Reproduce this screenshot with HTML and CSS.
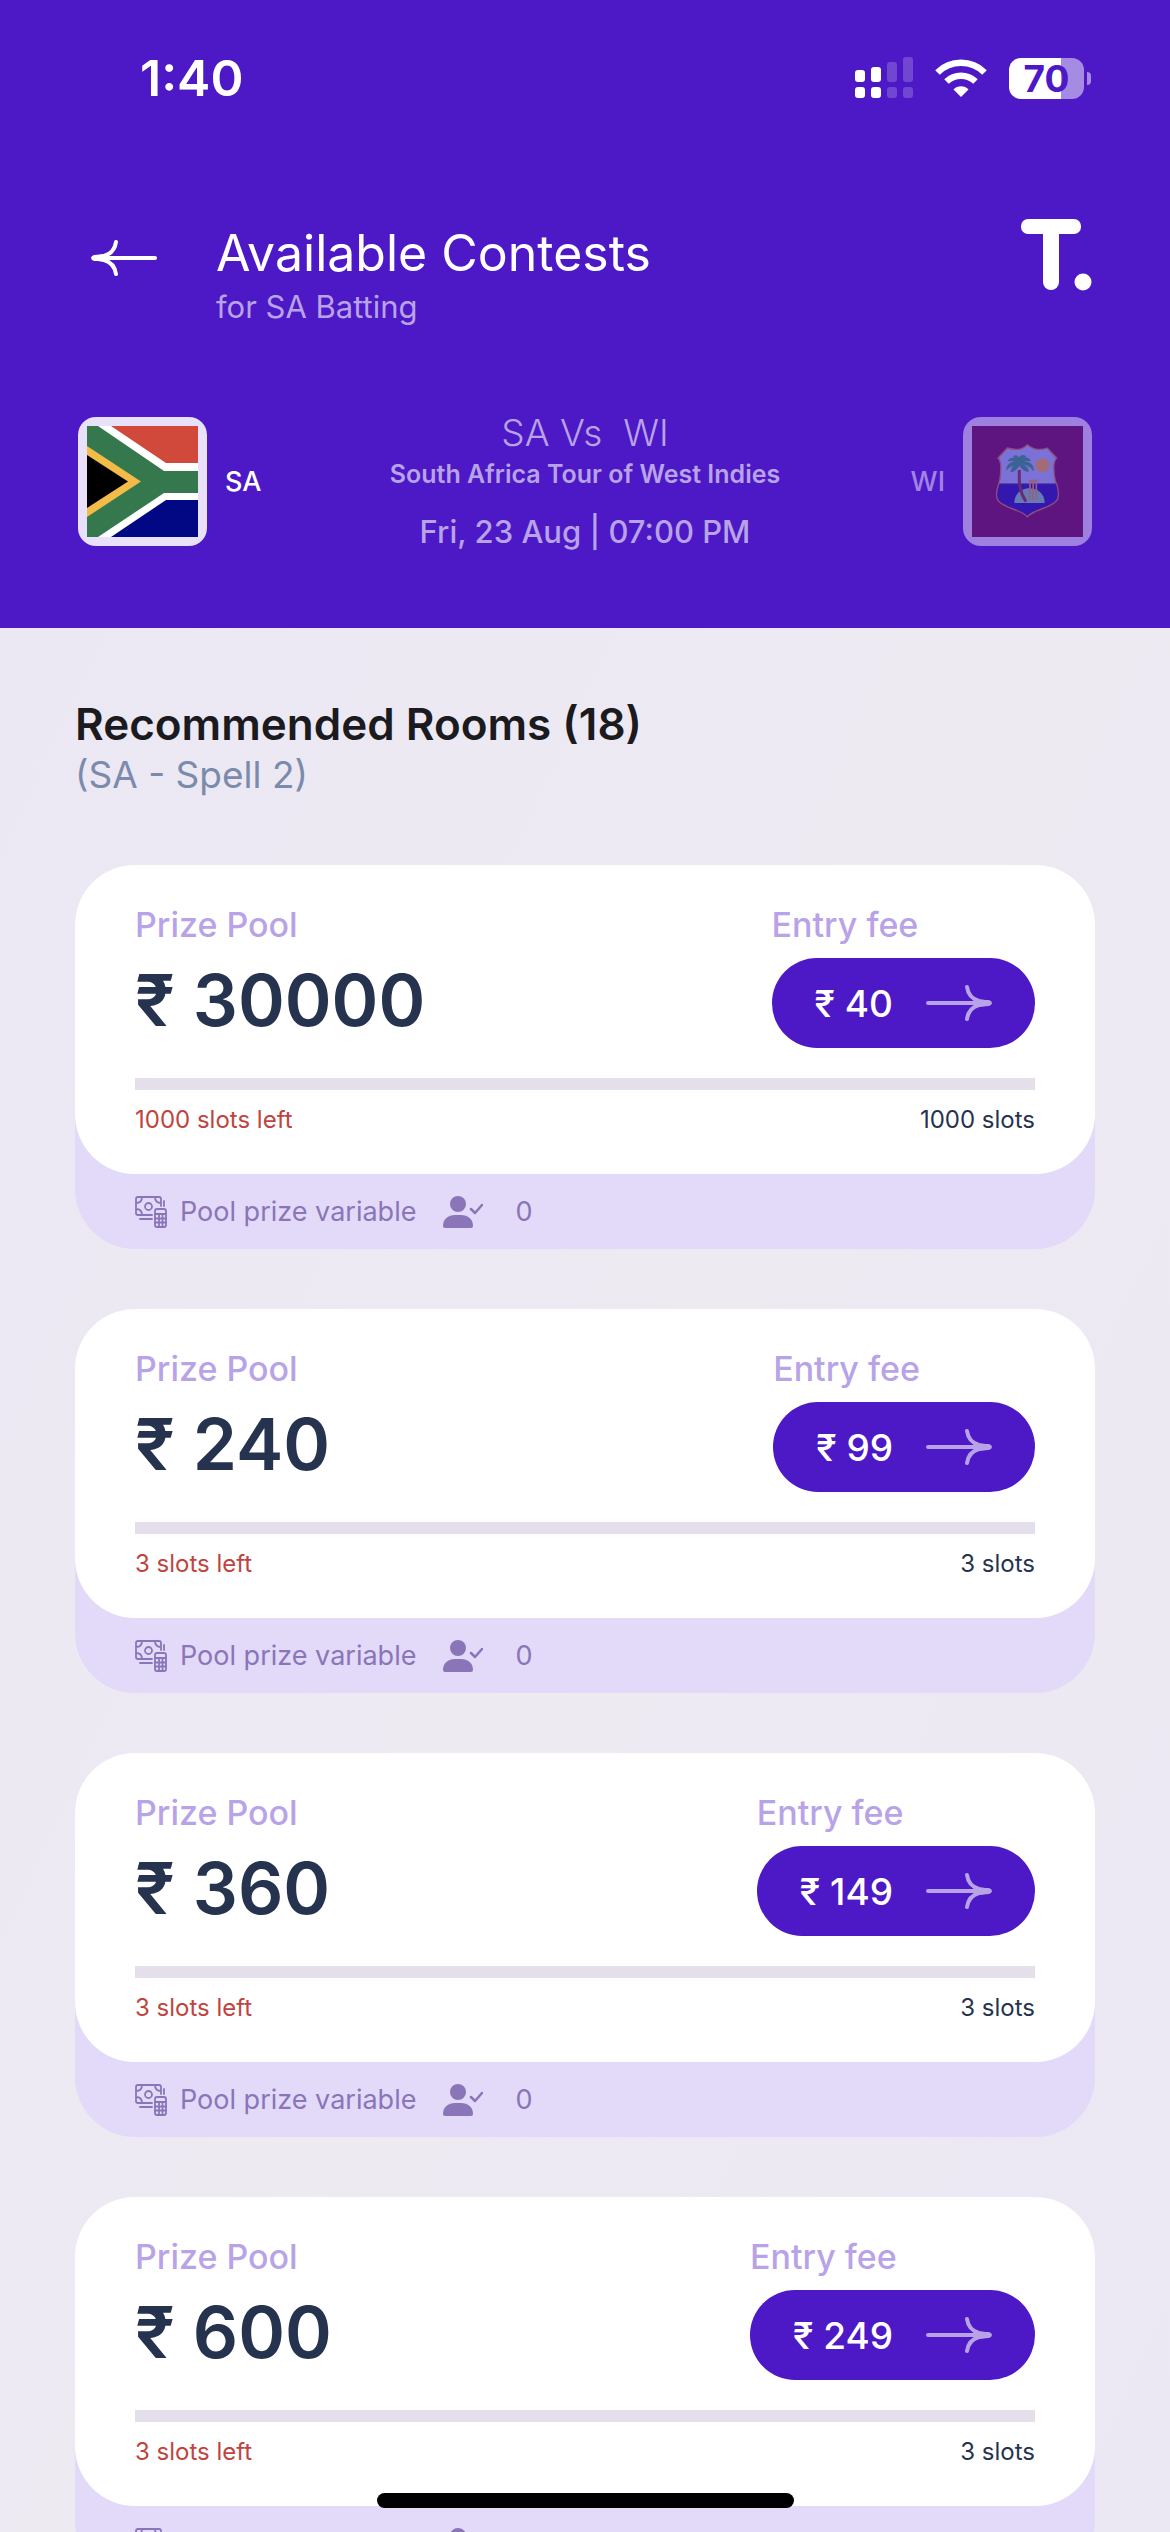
FILE: index.html
```html
<!DOCTYPE html>
<html lang="en">
<head>
<meta charset="utf-8">
<meta name="viewport" content="width=device-width, initial-scale=1">
<title>Available Contests</title>
<link rel="stylesheet" href="styles.css">
</head>
<body>
<svg class="defs" aria-hidden="true">
  <symbol id="arrow" viewBox="0 0 66 36">
    <path d="M2 18H62" fill="none" stroke="currentColor" stroke-width="4" stroke-linecap="round"/>
    <path d="M41 2C42 9 46 14 53 16L62 17.500M41 34C42 27 46 22 53 20L62 18.500" fill="none" stroke="currentColor" stroke-width="4" stroke-linecap="round" stroke-linejoin="round"/>
    <path d="M50 15L63 15Q66 16 66 18T63 21L50 22Z" fill="currentColor"/>
  </symbol>
  <symbol id="cash" viewBox="0 0 32 32">
    <g fill="none" stroke="currentColor" stroke-width="1.800" stroke-linecap="round" stroke-linejoin="round">
      <path d="M17 19H3Q1 19 1 17V3Q1 1 3 1H24Q26 1 26 3V10M1 7Q7 7 7 1M1 13Q7 13 7 19M26 7Q20 7 20 1M29 5V10M5 23H17"/>
      <circle cx="13.500" cy="10.500" r="3.500"/>
      <rect x="20" y="13" width="11" height="18" rx="2"/>
      <path d="M20 18H31M20 22.500H31M20 26.500H31M24 18V31M27.500 18V31"/>
    </g>
  </symbol>
  <symbol id="person" viewBox="0 0 40 32">
    <circle cx="15" cy="8" r="8" fill="currentColor"/>
    <path d="M0 30C0 23 5 19 12 19H18C25 19 30 23 30 30Q30 32 28 32H2Q0 32 0 30Z" fill="currentColor"/>
    <path d="M28 13L32 17L39 9" fill="none" stroke="currentColor" stroke-width="2.500" stroke-linecap="round" stroke-linejoin="round"/>
  </symbol>
</svg>

<div class="app">
  <header class="header">
    <div class="status">
      <span class="time">1:40</span>
      <div class="status-icons">
        <svg width="58" height="42" viewBox="0 0 58 42" fill="#fff" aria-label="Signal">
          <rect x="0" y="13" width="10" height="12" rx="3"/><rect x="16" y="10" width="10" height="15" rx="3"/>
          <rect x="0" y="30" width="10" height="11" rx="3"/><rect x="16" y="30" width="10" height="11" rx="3"/>
          <g opacity=".2"><rect x="32" y="5" width="10" height="20" rx="3"/><rect x="48" y="0" width="10" height="25" rx="3"/>
          <rect x="32" y="30" width="10" height="11" rx="3"/><rect x="48" y="30" width="10" height="11" rx="3"/></g>
        </svg>
        <svg width="52" height="38" viewBox="0 0 52 38" aria-label="Wi-Fi">
          <g fill="none" stroke="#fff" stroke-width="6.500"><path d="M2.500 13.500A33.500 33.500 0 0 1 49.500 13.500"/><path d="M11.500 22.500A21 21 0 0 1 40.500 22.500"/></g>
          <path d="M26 38L18.500 30.500A10.500 10.500 0 0 1 33.500 30.500Z" fill="#fff"/>
        </svg>
        <div class="battery"><span class="battery-level">70</span><span class="battery-tip"></span></div>
      </div>
    </div>

    <div class="titlebar">
      <button class="back" type="button" aria-label="Back"><svg width="66" height="36"><use href="#arrow"/></svg></button>
      <div class="titles">
        <h1 class="title">Available Contests</h1>
        <p class="subtitle">for SA Batting</p>
      </div>
      <svg class="logo" width="71" height="72" viewBox="0 0 71 72" fill="#fff" aria-label="T.">
        <rect x="0" y="0" width="60" height="15" rx="7"/><rect x="22" y="0" width="16" height="71" rx="8"/><circle cx="62" cy="63" r="8.500"/>
      </svg>
    </div>

    <div class="match">
      <div class="team">
        <span class="flag">
          <svg width="111" height="111" viewBox="0 0 111 111" aria-label="South Africa">
            <path d="M0 0H111V111H0Z" fill="#fff"/>
            <path d="M24 0L79 37H111V0Z" fill="#d1493a"/>
            <path d="M24 111L79 74H111V111Z" fill="#020883"/>
            <path d="M0 0H11L77 45H111V67H77L11 111H0Z" fill="#35784d"/>
            <path d="M0 20L54 55.500L0 91Z" fill="#f3bc48"/>
            <path d="M0 29L41 55.500L0 82Z" fill="#000"/>
          </svg>
        </span>
        <span>SA</span>
      </div>
      <div class="match-info">
        <p class="versus">SA Vs &nbsp;WI</p>
        <p class="tour">South Africa Tour of West Indies</p>
        <p class="date">Fri, 23 Aug | 07:00 PM</p>
      </div>
      <div class="team away">
        <span>WI</span>
        <span class="flag">
          <svg width="111" height="111" viewBox="0 0 333 333" aria-label="West Indies">
            <path d="M0 0H333V333H0Z" fill="#5e157f"/>
            <clipPath id="shield"><path d="M166 56Q149 72 132 70T106 66L78 96Q88 107 86 130Q86 160 78 180Q68 215 80 226C104 250 142 248 166 272C190 248 228 250 252 226Q264 215 256 180Q246 160 246 130Q244 107 254 96L226 66Q216 70 200 70T166 56Z"/></clipPath>
            <g clip-path="url(#shield)">
              <path d="M60 50H270V280H60Z" fill="#7b71d6"/>
              <path d="M60 173H270V280H60Z" fill="#3317ae"/>
              <path d="M60 173H270" stroke="#5b3fa0" stroke-width="3"/>
            </g>
            <path d="M127 231C127 172 218 172 218 231Z" fill="#667ab5"/>
            <path d="M166 56Q149 72 132 70T106 66L78 96Q88 107 86 130Q86 160 78 180Q68 215 80 226C104 250 142 248 166 272C190 248 228 250 252 226Q264 215 256 180Q246 160 246 130Q244 107 254 96L226 66Q216 70 200 70T166 56Z" fill="none" stroke="#8f4c7d" stroke-width="4"/>
            <circle cx="211" cy="118" r="21" fill="#a36b78"/>
            <path d="M174 223V164H193V223M183.500 164V223" fill="none" stroke="#96607f" stroke-width="5"/>
            <path d="M142 132C142 160 138 190 162 227" fill="none" stroke="#682c74" stroke-width="9"/>
            <path d="M142 112C132 94 116 94 110 104C125 100 134 106 142 112C124 104 108 112 104 130C116 116 130 114 142 114C126 118 118 126 118 137C130 134 136 126 142 116C150 126 156 136 168 136C168 126 158 118 144 114C158 112 172 116 184 132C182 112 164 104 144 111C152 104 164 100 174 104C166 92 150 94 142 108C146 98 152 92 160 91C148 86 142 92 141 100C138 90 132 88 126 92C136 96 139 104 142 112Z" fill="#3b6393" stroke="#3b6393" stroke-width="4" stroke-linejoin="round"/>
          </svg>
        </span>
      </div>
    </div>
  </header>

  <main class="rooms">
    <h2 class="rooms-title">Recommended Rooms (18)</h2>
    <p class="rooms-sub">(SA - Spell 2)</p>

    <div class="list">
      <article class="card">
        <div class="card-body">
          <div class="card-top">
            <div class="col"><span class="label">Prize Pool</span><strong class="amount">₹ 30000</strong></div>
            <div class="col"><span class="label">Entry fee</span><button class="join" type="button">₹ 40<svg width="66" height="36"><use href="#arrow"/></svg></button></div>
          </div>
          <div class="bar"></div>
          <div class="slots"><span class="left">1000 slots left</span><span>1000 slots</span></div>
        </div>
        <div class="card-foot"><svg width="32" height="32"><use href="#cash"/></svg><span class="variable">Pool prize variable</span><svg width="40" height="32"><use href="#person"/></svg><span class="joined">0</span></div>
      </article>

      <article class="card">
        <div class="card-body">
          <div class="card-top">
            <div class="col"><span class="label">Prize Pool</span><strong class="amount">₹ 240</strong></div>
            <div class="col"><span class="label">Entry fee</span><button class="join" type="button">₹ 99<svg width="66" height="36"><use href="#arrow"/></svg></button></div>
          </div>
          <div class="bar"></div>
          <div class="slots"><span class="left">3 slots left</span><span>3 slots</span></div>
        </div>
        <div class="card-foot"><svg width="32" height="32"><use href="#cash"/></svg><span class="variable">Pool prize variable</span><svg width="40" height="32"><use href="#person"/></svg><span class="joined">0</span></div>
      </article>

      <article class="card">
        <div class="card-body">
          <div class="card-top">
            <div class="col"><span class="label">Prize Pool</span><strong class="amount">₹ 360</strong></div>
            <div class="col"><span class="label">Entry fee</span><button class="join" type="button">₹ 149<svg width="66" height="36"><use href="#arrow"/></svg></button></div>
          </div>
          <div class="bar"></div>
          <div class="slots"><span class="left">3 slots left</span><span>3 slots</span></div>
        </div>
        <div class="card-foot"><svg width="32" height="32"><use href="#cash"/></svg><span class="variable">Pool prize variable</span><svg width="40" height="32"><use href="#person"/></svg><span class="joined">0</span></div>
      </article>

      <article class="card">
        <div class="card-body">
          <div class="card-top">
            <div class="col"><span class="label">Prize Pool</span><strong class="amount">₹ 600</strong></div>
            <div class="col"><span class="label">Entry fee</span><button class="join" type="button">₹ 249<svg width="66" height="36"><use href="#arrow"/></svg></button></div>
          </div>
          <div class="bar"></div>
          <div class="slots"><span class="left">3 slots left</span><span>3 slots</span></div>
        </div>
        <div class="card-foot"><svg width="32" height="32"><use href="#cash"/></svg><span class="variable">Pool prize variable</span><svg width="40" height="32"><use href="#person"/></svg><span class="joined">0</span></div>
      </article>
    </div>
  </main>
  <div class="home-indicator"></div>
</div>
</body>
</html>
```
FILE: styles.css
```css
* { box-sizing: border-box; margin: 0; padding: 0; }

:root {
  --purple: #4d18c5;
  --lavender: #b8a3e8;
  --lilac: #e2daf8;
  --navy: #26334e;
  --muted: #8b75b9;
}

body { font-family: Inter, "Liberation Sans", sans-serif; color: var(--navy); }
button { font: inherit; border: 0; cursor: pointer; }
svg { display: block; flex: none; }
.defs { position: absolute; width: 0; height: 0; }

.app { display: flex; flex-direction: column; height: 100vh; overflow: hidden; }

/* Header */
.header { flex: none; padding: 0 78px 78px; background: var(--purple); color: #fff; }
.status { display: flex; align-items: center; justify-content: space-between; height: 156px; padding-left: 62px; }
.time { font-size: 50px; font-weight: 600; line-height: 60px; }
.status-icons { display: flex; align-items: center; gap: 22px; }
.battery {
  position: relative; width: 75px; height: 41px; margin-right: 8px; border-radius: 12px;
  background: linear-gradient(90deg, #fff 70%, #a68be2 70%);
  color: var(--purple); font-size: 37px; font-weight: 700; line-height: 41px; text-align: center;
}
.battery-tip { position: absolute; right: -7px; top: 14px; width: 4px; height: 13px; border-radius: 0 6px 6px 0; background: #a68be2; }

.titlebar { display: flex; align-items: flex-start; margin-top: 63px; }
.back { margin: 21px 0 0 13px; background: none; color: #fff; }
.back svg { transform: rotate(180deg); }
.titles { flex: 1; margin: 4px 0 0 59px; }
.title { font-size: 50px; font-weight: 400; line-height: 60px; }
.subtitle { margin-top: 3px; color: var(--lavender); font-size: 31px; line-height: 42px; }

.match { display: grid; grid-template-columns: 1fr auto 1fr; align-items: center; margin-top: 84px; }
.team { display: flex; align-items: center; gap: 18px; font-size: 27px; font-weight: 500; }
.away { justify-content: flex-end; color: #a184e1; }
.flag { padding: 9px; border-radius: 18px; background: #e9e1f9; }
.away .flag { background: #9d80df; }
.match-info { color: var(--lavender); text-align: center; }
.versus { font-size: 37px; font-weight: 300; line-height: 42px; }
.tour { margin-top: 5px; font-size: 25px; font-weight: 600; line-height: 30px; }
.date { margin-top: 25px; font-size: 31px; font-weight: 500; line-height: 36px; }

/* Rooms */
.rooms {
  flex: 1; min-height: 0; overflow-y: auto; scrollbar-width: none;
  padding: 69px 75px 60px; background: linear-gradient(115deg, #ebe8f4, #eeeaf2 50%, #ebe8f4);
}
.rooms-title { color: #1b1b1f; font-size: 44px; font-weight: 600; line-height: 54px; }
.rooms-sub { color: #7a8bab; font-size: 37px; line-height: 48px; }
.list { display: flex; flex-direction: column; gap: 60px; margin-top: 66px; }

.card { border-radius: 60px; background: linear-gradient(transparent 50%, var(--lilac) 50%); }
.card-body { padding: 36px 60px 39px; border-radius: 60px; background: #fff; }
.card-top { display: flex; justify-content: space-between; }
.col { display: flex; flex-direction: column; gap: 9px; }
.label { color: var(--lavender); font-size: 34px; font-weight: 500; line-height: 48px; }
.amount { font-size: 71px; font-weight: 600; line-height: 84px; }
.join {
  display: flex; align-items: center; gap: 33px; height: 90px; padding: 0 43px;
  border-radius: 45px; background: var(--purple); color: #fff; font-size: 37px; font-weight: 500;
}
.join svg { color: var(--lavender); }
.bar { height: 12px; margin-top: 30px; background: #e4dfeb; }
.slots { display: flex; justify-content: space-between; margin-top: 15px; font-size: 24px; line-height: 30px; }
.left { color: #bf4440; }

.card-foot { display: flex; align-items: center; height: 75px; padding: 0 60px; color: var(--muted); font-size: 27px; }
.variable { margin: 0 27px 0 13px; }
.joined { margin-left: 32px; }

.home-indicator { position: fixed; left: 50%; bottom: 24px; width: 417px; height: 15px; margin-left: -208px; border-radius: 8px; background: #000; }
```
